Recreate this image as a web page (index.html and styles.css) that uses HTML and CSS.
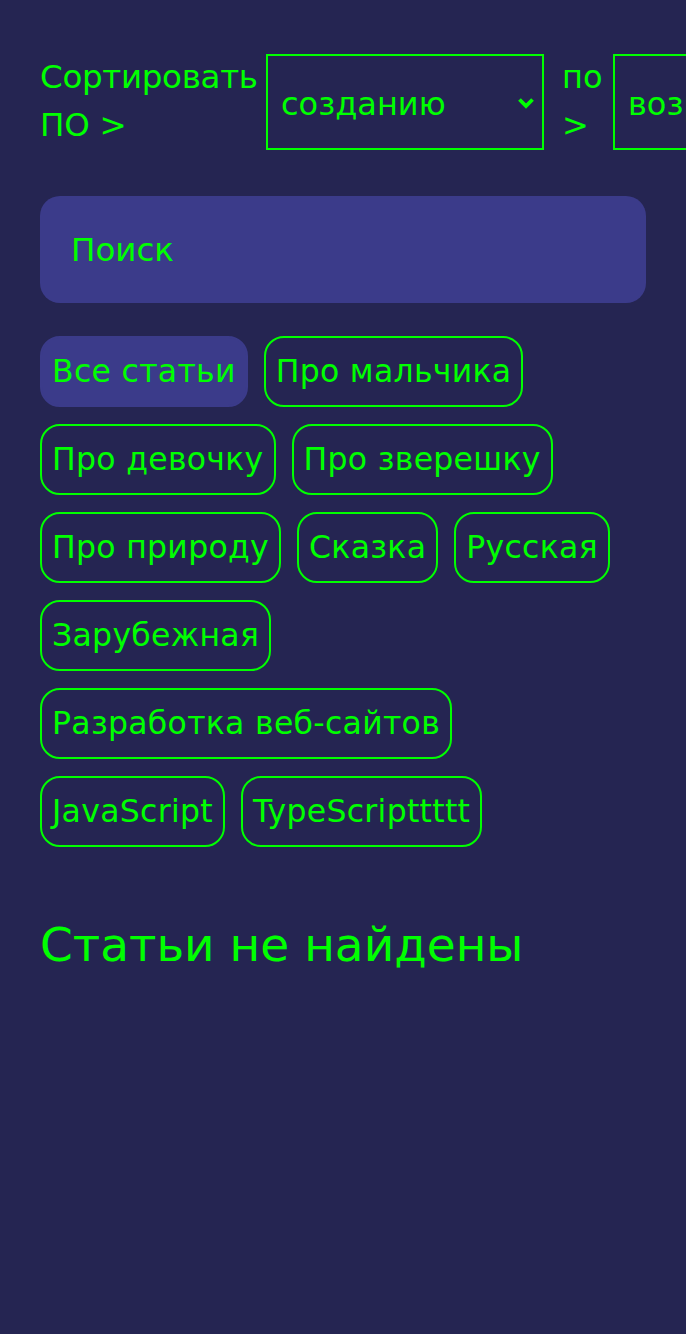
FILE: index.html
```html
<!DOCTYPE html>
<html lang="ru">
<head>
<meta charset="utf-8">
<link rel="stylesheet" href="styles.css">
</head>
<body>
<main class="page">
  <div class="sort">
    <span class="sort-label">Сортировать ПО &gt;</span>
    <div class="select select-first">
      <span>созданию</span>
      <svg class="chev" width="18" height="12" viewBox="0 0 18 12"><path d="M2.5 2.5 L9 9 L15.5 2.5" fill="none" stroke="#00ff00" stroke-width="3.8"/></svg>
    </div>
    <span class="sort-by">по &gt;</span>
    <div class="select select-second"><span>возрастанию</span></div>
  </div>
  <input class="search" type="text" placeholder="Поиск">
  <div class="tags">
    <span class="tag active">Все статьи</span>
    <span class="tag">Про мальчика</span>
    <span class="tag">Про девочку</span>
    <span class="tag">Про зверешку</span>
    <span class="tag">Про природу</span>
    <span class="tag">Сказка</span>
    <span class="tag">Русская</span>
    <span class="tag">Зарубежная</span>
    <span class="tag">Разработка веб-сайтов</span>
    <span class="tag">JavaScript</span>
    <span class="tag">TypeScripttttt</span>
  </div>
  <h2 class="empty">Статьи не найдены</h2>
</main>
</body>
</html>
```
FILE: styles.css
```css
html, body {
  margin: 0;
  padding: 0;
  background: #252552;
  overflow: hidden;
}
body {
  width: 686px;
  height: 1334px;
  font-family: "DejaVu Sans", sans-serif;
  color: #00ff00;
}
.page {
  padding: 54px 40px 0 40px;
  width: 606px;
}
.sort {
  display: flex;
  align-items: flex-start;
  width: 900px;
}
.sort > * { flex-shrink: 0; }
.sort-label {
  width: 220px;
  font-size: 32.5px;
  line-height: 48px;
  margin-top: -1px;
  letter-spacing: -0.3px;
}
.select {
  box-sizing: border-box;
  height: 96px;
  border: 2px solid #00ff00;
  display: flex;
  align-items: center;
  font-size: 32px;
  padding-left: 13px;
}
.select-first {
  width: 278px;
  margin-left: 6px;
  justify-content: space-between;
  padding-right: 7px;
}
.select span { margin-top: 3px; }
.chev { margin-top: 1px; }
.sort-by {
  width: 42px;
  margin-left: 18px;
  font-size: 32px;
  line-height: 48px;
  margin-top: -1px;
}
.select-second {
  width: 260px;
  margin-left: 9px;
}
.search {
  display: block;
  box-sizing: border-box;
  width: 606px;
  height: 107px;
  margin-top: 46px;
  border: none;
  outline: none;
  border-radius: 20px;
  background: #3b3b8a;
  padding: 0 31px;
  font-family: "DejaVu Sans", sans-serif;
  font-size: 32.5px;
  color: #00ff00;
}
.search::placeholder { color: #00ff00; opacity: 1; }
.tags {
  margin-top: 33px;
  display: flex;
  flex-wrap: wrap;
  gap: 17px 16px;
}
.tag {
  box-sizing: border-box;
  height: 71px;
  display: flex;
  align-items: center;
  padding: 0 10px;
  border: 2px solid #00ff00;
  border-radius: 20px;
  font-size: 31.5px;
  letter-spacing: 0.3px;
  line-height: 1;
}
.tag.active {
  background: #3b3b8a;
  border-color: #3b3b8a;
}
.empty {
  margin: 68px 0 0 0;
  font-weight: 400;
  font-size: 47px;
  line-height: 60px;
}
```
